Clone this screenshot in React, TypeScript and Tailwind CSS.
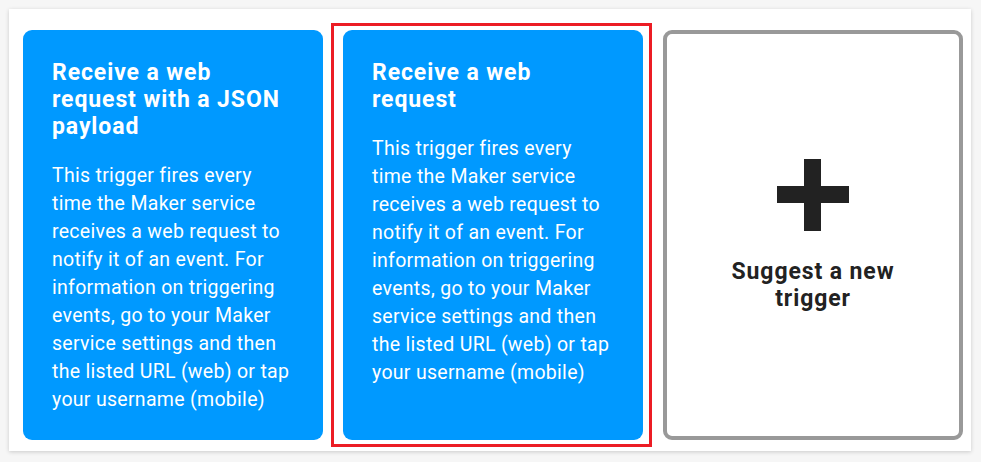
import { Fragment } from "react";

const triggers = [
  {
    title: ["Receive a web", "request with a JSON", "payload"],
    body: [
      "This trigger fires every",
      "time the Maker service",
      "receives a web request to",
      "notify it of an event. For",
      "information on triggering",
      "events, go to your Maker",
      "service settings and then",
      "the listed URL (web) or tap",
      "your username (mobile)",
    ],
    selected: false,
  },
  {
    title: ["Receive a web", "request"],
    body: [
      "This trigger fires every",
      "time the Maker service",
      "receives a web request to",
      "notify it of an event. For",
      "information on triggering",
      "events, go to your Maker",
      "service settings and then",
      "the listed URL (web) or tap",
      "your username (mobile)",
    ],
    selected: true,
  },
];

function Lines({ lines }: { lines: string[] }) {
  return (
    <>
      {lines.map((l, i) => (
        <Fragment key={l}>
          {i > 0 && <br />}
          {l}
        </Fragment>
      ))}
    </>
  );
}

export default function App() {
  return (
    <div className="w-[981px] h-[462px] bg-[#f6f6f6] pt-[9px] pl-[9px] font-['Roboto',sans-serif]">
      <div className="w-[962px] h-[442px] bg-white shadow-[0_1px_4px_rgba(0,0,0,0.18)] pl-[14px] pt-[21px] flex gap-[20px]">
        {triggers.map((t, i) => (
          <div key={i} className="relative w-[300px] h-[410px]">
            {t.selected && (
              <div className="absolute left-[-12px] right-[-9px] top-[-7px] bottom-[-7px] border-[3px] border-[#ec1c24]" />
            )}
            <div className="relative h-full rounded-[9px] bg-[#0099ff] text-white pl-[29px] pt-[29px]">
              <h3 className="text-[23px] font-bold leading-[27px] tracking-[0.9px] whitespace-nowrap mb-[22px]">
                <Lines lines={t.title} />
              </h3>
              <p className="text-[19.5px] leading-[28px] tracking-[0.3px] whitespace-nowrap">
                <Lines lines={t.body} />
              </p>
            </div>
          </div>
        ))}
        <div className="w-[300px] h-[410px] rounded-[9px] border-[4px] border-[#999999] flex flex-col items-center justify-center">
          <svg width="72" height="72" viewBox="0 0 72 72" className="mb-[27px]">
            <rect x="27" y="0" width="17" height="72" fill="#222" />
            <rect x="0" y="27" width="72" height="17" fill="#222" />
          </svg>
          <div className="text-[23px] font-bold leading-[27px] tracking-[0.9px] text-[#222] text-center">
            Suggest a new
            <br />
            trigger
          </div>
        </div>
      </div>
    </div>
  );
}
